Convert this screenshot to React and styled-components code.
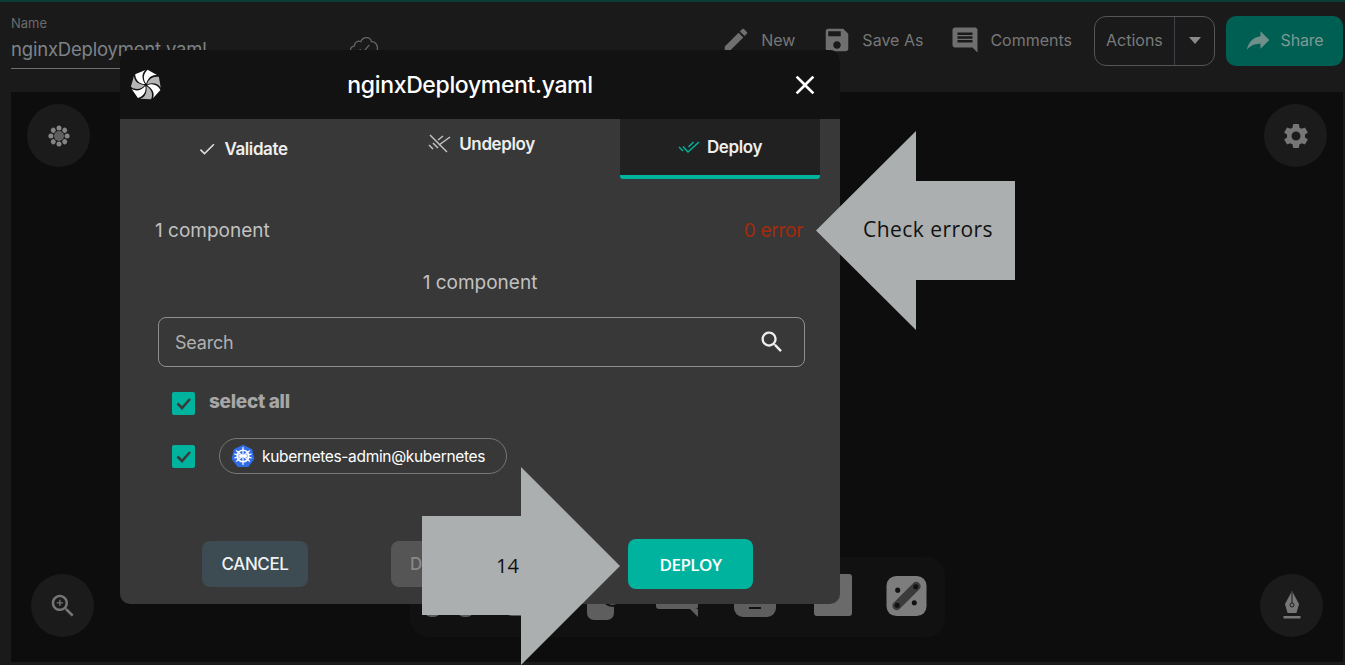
import React from 'react';
import styled, { createGlobalStyle } from 'styled-components';

const P = {
  edit: 'M3 17.25V21h3.75L17.81 9.94l-3.75-3.75L3 17.25zM20.71 7.04c.39-.39.39-1.02 0-1.41l-2.34-2.34a.9959.9959 0 0 0-1.41 0l-1.83 1.83 3.75 3.75 1.83-1.83z',
  save: 'M17 3H5c-1.11 0-2 .9-2 2v14c0 1.1.89 2 2 2h14c1.1 0 2-.9 2-2V7l-4-4zm-5 16c-1.66 0-3-1.34-3-3s1.34-3 3-3 3 1.34 3 3-1.34 3-3 3zm3-10H5V5h10v4z',
  comment: 'M21.99 4c0-1.1-.89-2-1.99-2H4c-1.1 0-2 .9-2 2v12c0 1.1.9 2 2 2h14l4 4-.01-18zM18 14H6v-2h12v2zm0-3H6V9h12v2zm0-3H6V6h12v2z',
  share: 'M14 9V5l7 7-7 7v-4.1c-5 0-8.5 1.6-11 5.1 1-5 4-10 11-11z',
  gear: 'M19.14 12.94c.04-.3.06-.61.06-.94 0-.32-.02-.64-.07-.94l2.03-1.58c.18-.14.23-.41.12-.61l-1.92-3.32c-.12-.22-.37-.29-.59-.22l-2.39.96c-.5-.38-1.03-.7-1.62-.94l-.36-2.54c-.04-.24-.24-.41-.48-.41h-3.84c-.24 0-.43.17-.47.41l-.36 2.54c-.59.24-1.13.57-1.62.94l-2.39-.96c-.22-.08-.47 0-.59.22L2.74 8.87c-.12.21-.08.47.12.61l2.03 1.58c-.05.3-.09.63-.09.94s.02.64.07.94l-2.03 1.58c-.18.14-.23.41-.12.61l1.92 3.32c.12.22.37.29.59.22l2.39-.96c.5.38 1.03.7 1.62.94l.36 2.54c.05.24.24.41.48.41h3.84c.24 0 .44-.17.47-.41l.36-2.54c.59-.24 1.13-.56 1.62-.94l2.39.96c.22.08.47 0 .59-.22l1.92-3.32c.12-.22.07-.47-.12-.61l-2.01-1.58zM12 15.6c-1.98 0-3.6-1.62-3.6-3.6s1.62-3.6 3.6-3.6 3.6 1.62 3.6 3.6-1.62 3.6-3.6 3.6z',
  search: 'M15.5 14h-.79l-.28-.27C15.41 12.59 16 11.11 16 9.5 16 5.91 13.09 3 9.5 3S3 5.91 3 9.5 5.91 16 9.5 16c1.61 0 3.09-.59 4.23-1.57l.27.28v.79l5 4.99L20.49 19l-4.99-5zm-6 0C7.01 14 5 11.99 5 9.5S7.01 5 9.5 5 14 7.01 14 9.5 11.99 14 9.5 14z',
  zoom: 'M15.5 14h-.79l-.28-.27C15.41 12.59 16 11.11 16 9.5 16 5.91 13.09 3 9.5 3S3 5.91 3 9.5 5.91 16 9.5 16c1.61 0 3.09-.59 4.23-1.57l.27.28v.79l5 4.99L20.49 19l-4.99-5zm-6 0C7.01 14 5 11.99 5 9.5S7.01 5 9.5 5 14 7.01 14 9.5 11.99 14 9.5 14zM12 10h-2v2H9v-2H7V9h2V7h1v2h2v1z',
  close: 'M19 6.41 17.59 5 12 10.59 6.41 5 5 6.41 10.59 12 5 17.59 6.41 19 12 13.41 17.59 19 19 17.59 13.41 12z',
  check: 'M9 16.17 4.83 12l-1.42 1.41L9 19 21 7l-1.41-1.41z',
};

const Icon = ({ d, size = 24, color = 'currentColor' }) => (
  <svg width={size} height={size} viewBox="0 0 24 24" fill={color} style={{ flex: 'none', display: 'block' }}>
    <path d={d} />
  </svg>
);

const Global = createGlobalStyle`
  html, body { margin: 0; padding: 0; height: 665px; overflow: hidden; background: #1a1a1a; }
  #root { height: 665px; }
  * { box-sizing: border-box; }
`;

const Page = styled.div`
  position: relative;
  width: 1345px;
  height: 665px;
  background: #1a1a1a;
  font-family: Inter, "Liberation Sans", sans-serif;
  overflow: hidden;
  display: flex;
  flex-direction: column;
`;
const TopLine = styled.div`
  height: 2px;
  flex: none;
  background: #0b3b35;
`;
const Header = styled.header`
  height: 90px;
  flex: none;
  display: flex;
  align-items: flex-start;
  padding: 14px 2px 0 11px;
  color: #7c7c7c;
`;
const NameField = styled.div`
  width: 200px;
  height: 53px;
  border-bottom: 1px solid #6e6e6e;
  flex: none;
`;
const NameLabel = styled.div`
  font-size: 13px;
  line-height: 14px;
  color: #6b6b6b;
`;
const NameValue = styled.div`
  font-size: 18.5px;
  line-height: 24px;
  margin-top: 7px;
  letter-spacing: -0.2px;
  color: #7d8489;
  white-space: nowrap;
`;
const CloudWrap = styled.div`
  margin: 18px 0 0 137px;
  flex: none;
`;
const HeaderActions = styled.div`
  margin-left: auto;
  display: flex;
  align-items: center;
  height: 50px;
`;
const HeaderAction = styled.div`
  display: flex;
  align-items: center;
  gap: 10px;
  font-size: 16px;
  margin-right: ${(p) => p.$mr}px;
  color: #777;
  padding-bottom: 2px;
`;
const ActionsButton = styled.div`
  width: 121px;
  height: 50px;
  border: 1px solid #555;
  border-radius: 12px;
  display: grid;
  grid-template-columns: 80px 1fr;
  align-items: stretch;
  margin-right: 11px;
`;
const ActionsLabel = styled.div`
  display: flex;
  align-items: center;
  padding: 0 0 2px 11px;
  font-size: 16px;
  color: #7b7b7b;
  border-right: 1px solid #3c4148;
`;
const ActionsCaret = styled.div`
  display: flex;
  align-items: center;
  justify-content: center;
  padding-bottom: 2px;
  &::after {
    content: '';
    border-left: 6px solid transparent;
    border-right: 6px solid transparent;
    border-top: 7px solid #8a8a8a;
  }
`;
const ShareButton = styled.div`
  width: 117px;
  height: 50px;
  border-radius: 10px;
  background: #005f53;
  display: flex;
  align-items: center;
  justify-content: center;
  gap: 8px;
  padding: 0 3px 2px 0;
  font-size: 16px;
  letter-spacing: -0.2px;
  color: #7e9a95;
`;
const Canvas = styled.main`
  height: 570px;
  flex: none;
  margin: 0 2px 0 11px;
  background: #0d0d0d;
  display: flex;
  flex-direction: column;
  justify-content: space-between;
`;
const CanvasRow = styled.div`
  display: flex;
  justify-content: space-between;
  align-items: flex-end;
  padding: ${(p) => p.$pad};
`;
const RoundButton = styled.div`
  width: 63px;
  height: 63px;
  border-radius: 50%;
  background: #1b1b1b;
  display: flex;
  align-items: center;
  justify-content: center;
  color: #767676;
  flex: none;
`;
const Dock = styled.div`
  width: 535px;
  height: 80px;
  background: #111;
  border-radius: 18px;
  display: flex;
  align-items: flex-end;
`;
const DockItem = styled.div`
  position: relative;
  width: ${(p) => p.$w}px;
  height: 42px;
  margin-left: ${(p) => p.$ml}px;
  margin-bottom: ${(p) => p.$mb}px;
  border-radius: ${(p) => p.$r}px;
  background: ${(p) => p.$bg};
  flex: none;
`;
const DockBubble = styled(DockItem)`
  border-radius: 3px;
  &::after {
    content: '';
    position: absolute;
    right: 0;
    top: 100%;
    border-top: 8px solid ${(p) => p.$bg};
    border-left: 8px solid transparent;
  }
`;
const DockBadge = styled(DockItem)`
  &::after {
    content: '';
    position: absolute;
    right: -9px;
    bottom: 13px;
    width: 17px;
    height: 17px;
    border-radius: 50%;
    background: #5e5e5e;
    border: 2px solid #111;
  }
`;
const DockNumber = styled(DockItem)`
  &::after {
    content: '';
    position: absolute;
    left: 15px;
    bottom: 8px;
    width: 12px;
    height: 2px;
    background: #111;
  }
`;
const Modal = styled.section`
  position: absolute;
  left: 120px;
  top: 50px;
  width: 720px;
  height: 554px;
  border-radius: 10px;
  background: #383838;
  overflow: hidden;
  display: flex;
  flex-direction: column;
`;
const ModalHead = styled.div`
  height: 69px;
  flex: none;
  background: #121212;
  display: flex;
  align-items: center;
  justify-content: space-between;
  padding: 0 19px 0 10px;
  color: #fff;
`;
const ModalTitle = styled.h2`
  margin: 0 11px 0 0;
  font-size: 23px;
  font-weight: 500;
  letter-spacing: -0.35px;
  color: #fff;
`;
const Tabs = styled.div`
  height: 60px;
  flex: none;
  display: grid;
  grid-template-columns: 239px 239px 219px;
  padding-left: 3px;
  justify-content: start;
`;
const Tab = styled.div`
  display: flex;
  align-items: center;
  justify-content: center;
  gap: 7px;
  font-size: 17px;
  font-weight: 600;
  letter-spacing: -0.4px;
  color: #eee;
  padding-bottom: ${(p) => p.$up}px;
  background: ${(p) => (p.$active ? '#212121' : 'transparent')};
  border-bottom: ${(p) => (p.$active ? '4px solid #00b39f' : '0')};
  border-radius: ${(p) => (p.$active ? '0 0 3px 3px' : '0')};
  margin-left: ${(p) => (p.$active ? '19px' : '0')};
`;
const Summary = styled.div`
  display: flex;
  justify-content: space-between;
  padding: 40px 37px 0 35px;
  font-size: 19px;
  line-height: 24px;
  color: #c2c2c2;
`;
const ErrorText = styled.span`
  color: #a52a0c;
  letter-spacing: -0.3px;
`;
const CenterCount = styled.div`
  text-align: center;
  margin-top: 28px;
  font-size: 19px;
  line-height: 24px;
  color: #c2c2c2;
`;
const SearchBox = styled.div`
  margin: 22px 35px 0 38px;
  height: 50px;
  border: 1px solid #8f8f8f;
  border-radius: 8px;
  display: flex;
  align-items: center;
  justify-content: space-between;
  padding: 0 18px 0 16px;
  font-size: 18px;
  letter-spacing: -0.2px;
  color: #b0b0b0;
`;
const CheckRow = styled.div`
  display: flex;
  align-items: center;
  margin-top: ${(p) => p.$mt}px;
  padding-left: 52px;
`;
const CheckBox = styled.div`
  width: 23px;
  height: 23px;
  border-radius: 2px;
  background: #00b39f;
  display: flex;
  align-items: center;
  justify-content: center;
  flex: none;
`;
const SelectAll = styled.div`
  margin: -4px 0 0 14px;
  font-size: 19px;
  line-height: 20px;
  font-weight: 800;
  letter-spacing: -0.3px;
  color: #a6a6a6;
`;
const Chip = styled.div`
  margin-left: 24px;
  width: 288px;
  height: 36px;
  border: 1px solid #777;
  border-radius: 18px;
  display: flex;
  align-items: center;
  gap: 7px;
  padding-left: 11px;
  font-size: 15.5px;
  letter-spacing: -0.33px;
  color: #fff;
  white-space: nowrap;
`;
const Footer = styled.div`
  display: flex;
  align-items: center;
  height: 50px;
  margin-top: 65px;
  padding-left: 82px;
`;
const FooterButton = styled.div`
  width: ${(p) => p.$w}px;
  height: ${(p) => p.$h}px;
  margin-left: ${(p) => p.$ml}px;
  border-radius: 8px;
  background: ${(p) => p.$bg};
  color: ${(p) => p.$fg};
  display: flex;
  align-items: center;
  justify-content: ${(p) => p.$justify || 'center'};
  padding-left: ${(p) => p.$pl || 0}px;
  font-size: 17px;
  font-weight: 500;
  letter-spacing: -0.4px;
  flex: none;
`;
const DeployButton = styled(FooterButton)`
  font-family: "Open Sans", sans-serif;
  font-weight: 600;
  letter-spacing: -0.5px;
`;
const Callout = styled.div`
  position: absolute;
  left: ${(p) => p.$x}px;
  top: ${(p) => p.$y}px;
  width: 199px;
  height: 199px;
  display: flex;
  align-items: center;
  color: ${(p) => p.$fg};
  font-family: "Open Sans", sans-serif;
  font-size: ${(p) => p.$fs}px;
`;
const CalloutShape = styled.svg`
  position: absolute;
  inset: 0;
`;
const CalloutLabel = styled.span`
  position: relative;
  margin-left: ${(p) => p.$ml}px;
  padding-bottom: 3px;
  letter-spacing: ${(p) => p.$ls}px;
  white-space: nowrap;
`;

const Swirl = () => {
  const blades = [0, 1, 2, 3, 4, 5, 6];
  return (
    <svg width="32" height="32" viewBox="-16 -16 32 32" style={{ flex: 'none' }}>
      {blades.map((i) => (
        <path
          key={i}
          transform={`rotate(${(i * 360) / 7 + 10})`}
          d="M0 -1.2 C-4.5 -5 -4.5 -11 -1 -15.2 L9.5 -11.6 C3.5 -11.5 0.5 -6.5 0 -1.2Z"
          fill={i % 2 ? '#b5b5b5' : '#fff'}
        />
      ))}
    </svg>
  );
};

const Kube = () => (
  <svg width="24" height="24" viewBox="0 0 24 24" style={{ flex: 'none' }}>
    <path d="M12 .8 21.2 5.2 23.4 15 17.2 23H6.8L.6 15 2.8 5.2Z" fill="#326ce5" />
    <circle cx="12" cy="12" r="5.8" fill="none" stroke="#fff" strokeWidth="1.5" />
    <circle cx="12" cy="12" r="1.3" fill="#fff" />
    <g stroke="#fff" strokeWidth="1.2" strokeLinecap="round">
      <path d="M12 3.6V20.4" />
      <path d="M5.4 6.8 18.6 17.2" />
      <path d="M18.6 6.8 5.4 17.2" />
      <path d="M3.8 13.9 20.2 10.1" />
      <path d="M20.2 13.9 3.8 10.1" />
    </g>
  </svg>
);

const BoxCheck = () => (
  <svg width="19" height="19" viewBox="0 0 19 19" fill="none" stroke="#3a3a3a" strokeWidth="2.6">
    <path d="M3.5 9.5 8 14 16 5" />
  </svg>
);

const DoubleCheck = ({ color }) => (
  <svg width="22" height="14" viewBox="0 0 22 14" fill="none" stroke={color} strokeWidth="1.5" style={{ flex: 'none' }}>
    <path d="M1 7 5 11" />
    <path d="M5 6.5 10 12 21 2" />
    <path d="M10.5 7 15.5 2" />
  </svg>
);

const UndeployIcon = () => (
  <svg width="24" height="20" viewBox="0 0 24 20" fill="none" stroke="#c4c4c4" strokeWidth="1.5" style={{ flex: 'none' }}>
    <path d="M2 1 19 18" />
    <path d="M1 11 5 15" />
    <path d="M5 9 10 14" />
    <path d="M11 11 22 3" />
    <path d="M10 6 15 2" />
  </svg>
);

const Flower = () => (
  <svg width="24" height="24" viewBox="0 0 24 24" fill="#858585">
    {[0, 45, 90, 135, 180, 225, 270, 315].map((a) => (
      <circle key={a} cx="12" cy="3.9" r="2.5" transform={`rotate(${a} 12 12)`} />
    ))}
    <circle cx="12" cy="12" r="5" fill="#5f5f5f" />
  </svg>
);

const Pen = () => (
  <svg width="24" height="32" viewBox="0 0 24 32" fill="#777">
    <path d="M12 1 19 14 16.5 23H7.5L5 14Z" />
    <path d="M3.5 26H20.5V28.5H3.5Z" />
    <path d="M12 2V13" stroke="#1b1b1b" strokeWidth="1" />
    <circle cx="12" cy="15" r="2" fill="none" stroke="#1b1b1b" strokeWidth="1" />
  </svg>
);

const Cloud = () => (
  <svg width="32" height="26" viewBox="0 0 30 24" fill="none" stroke="#666" strokeWidth="1.2">
    <path d="M6 20C1 19 1 12 6 11 6 7 10 6 12 7 14 2 21 2 22 7 26 7 29 11 27 16" />
    <path d="M11 14 14 17 20 10" />
  </svg>
);

const Connect = () => (
  <svg width="41" height="42" viewBox="0 0 42 42">
    <rect x="0.5" y="0.5" width="41" height="41" rx="10" fill="#7d7d7d" />
    <path d="M11 31 31 11" stroke="#3b3b3b" strokeWidth="9" strokeLinecap="round" />
    <circle cx="11.5" cy="30.5" r="2.6" fill="#111" />
    <circle cx="30.5" cy="11.5" r="2.6" fill="#111" />
    <circle cx="12" cy="15" r="2.6" fill="#111" />
    <circle cx="29" cy="28" r="2.6" fill="#111" />
  </svg>
);

const Arrow = () => (
  <CalloutShape width="199" height="199" viewBox="0 0 199 199">
    <path d="M0 99.5 100 0V50H199V149H100V199Z" fill="#abafaf" />
  </CalloutShape>
);

const ArrowRight = () => (
  <CalloutShape width="199" height="199" viewBox="0 0 199 199">
    <path d="M198 99 99 0V49H0V148H99V198Z" fill="#abafaf" />
  </CalloutShape>
);

export default function App() {
  return (
    <Page>
      <Global />
      <TopLine />
      <Header>
        <NameField>
          <NameLabel>Name</NameLabel>
          <NameValue>nginxDeployment.yaml</NameValue>
        </NameField>
        <CloudWrap><Cloud /></CloudWrap>
        <HeaderActions>
          <HeaderAction $mr={27}><Icon d={P.edit} size={30} color="#6f6f6f" />New</HeaderAction>
          <HeaderAction $mr={27}><Icon d={P.save} size={30} color="#6f6f6f" />Save As</HeaderAction>
          <HeaderAction $mr={22}><Icon d={P.comment} size={30} color="#6f6f6f" />Comments</HeaderAction>
          <ActionsButton>
            <ActionsLabel>Actions</ActionsLabel>
            <ActionsCaret />
          </ActionsButton>
          <ShareButton><Icon d={P.share} size={30} color="#6f8f8a" />Share</ShareButton>
        </HeaderActions>
      </Header>
      <Canvas>
        <CanvasRow $pad="12px 16px 0 16px">
          <RoundButton><Flower /></RoundButton>
          <RoundButton><Icon d={P.gear} size={30} /></RoundButton>
        </CanvasRow>
        <CanvasRow $pad="0 20px 25px 20px">
          <RoundButton><Icon d={P.zoom} size={30} /></RoundButton>
          <Dock>
            <DockItem $w={15} $ml={15} $mb={20} $r={6} $bg="#5a5a5a" />
            <DockItem $w={15} $ml={18} $mb={20} $r={6} $bg="#5a5a5a" />
            <DockItem $w={26} $ml={33} $mb={21} $r={6} $bg="#5a5a5a" />
            <DockBadge $w={27} $ml={55} $mb={17} $r={7} $bg="#5e5e5e" />
            <DockBubble $w={42} $ml={42} $mb={28} $bg="#5e5e5e" />
            <DockNumber $w={42} $ml={36} $mb={20} $r={9} $bg="#5e5e5e" />
            <DockItem $w={38} $ml={38} $mb={21} $r={3} $bg="#6a6a6a" />
            <DockItem $w={41} $ml={34} $mb={20} $r={10} $bg="transparent"><Connect /></DockItem>
          </Dock>
          <RoundButton><Pen /></RoundButton>
        </CanvasRow>
      </Canvas>

      <Modal>
        <ModalHead>
          <Swirl />
          <ModalTitle>nginxDeployment.yaml</ModalTitle>
          <Icon d={P.close} size={32} color="#fff" />
        </ModalHead>
        <Tabs>
          <Tab $up={0}><Icon d={P.check} size={20} color="#ddd" />Validate</Tab>
          <Tab $up={10}><UndeployIcon />Undeploy</Tab>
          <Tab $active $up={0}><DoubleCheck color="#00b39f" />Deploy</Tab>
        </Tabs>
        <Summary>
          <span>1 component</span>
          <ErrorText>0 error</ErrorText>
        </Summary>
        <CenterCount>1 component</CenterCount>
        <SearchBox>
          Search
          <Icon d={P.search} size={28} color="#eee" />
        </SearchBox>
        <CheckRow $mt={25}>
          <CheckBox><BoxCheck /></CheckBox>
          <SelectAll>select all</SelectAll>
        </CheckRow>
        <CheckRow $mt={23}>
          <CheckBox><BoxCheck /></CheckBox>
          <Chip><Kube />kubernetes-admin@kubernetes</Chip>
        </CheckRow>
        <Footer>
          <FooterButton $w={106} $h={46} $bg="#3d4b52" $fg="#eef2f4">CANCEL</FooterButton>
          <FooterButton $w={120} $h={46} $ml={83} $bg="#555" $fg="#888" $justify="flex-start" $pl={19}>DEPLOY</FooterButton>
          <DeployButton $w={125} $h={50} $ml={117} $bg="#00b39f" $fg="#fff">DEPLOY</DeployButton>
        </Footer>
      </Modal>

      <Callout $x={816} $y={131} $fg="#111" $fs={21}>
        <Arrow />
        <CalloutLabel $ml={47} $ls={0.45}>Check errors</CalloutLabel>
      </Callout>
      <Callout $x={422} $y={467} $fg="#111" $fs={20}>
        <ArrowRight />
        <CalloutLabel $ml={74} $ls={0}>14</CalloutLabel>
      </Callout>
    </Page>
  );
}
